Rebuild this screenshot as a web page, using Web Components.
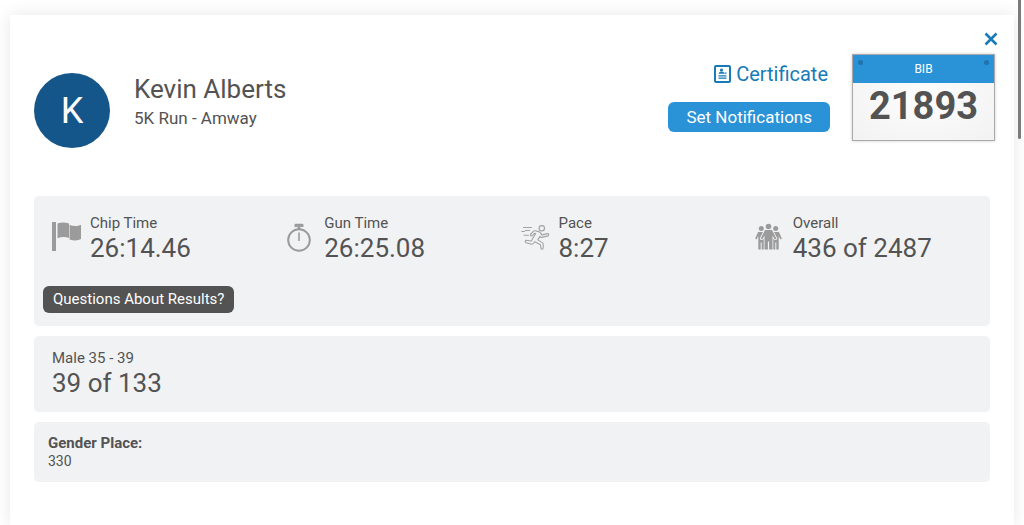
<!DOCTYPE html>
<html lang="en">
<head>
<meta charset="utf-8">
<meta name="viewport" content="width=device-width, initial-scale=1">
<title>Kevin Alberts - Results</title>
<style>
  html { background: #fff; }
  body { margin: 0; font-family: Roboto, "Liberation Sans", sans-serif; color: #535353; }
</style>
</head>
<body>
<result-page>
  <result-card>
    <athlete-summary slot="athlete" initial="K">
      <span slot="name">Kevin Alberts</span>
      <span slot="race">5K Run - Amway</span>
    </athlete-summary>
    <result-actions slot="actions"></result-actions>
    <race-bib slot="bib">21893</race-bib>

    <result-panel class="times">
      <metric-grid>
        <result-metric icon="flag" label="Chip Time">26:14.46</result-metric>
        <result-metric icon="watch" label="Gun Time">26:25.08</result-metric>
        <result-metric icon="runner" label="Pace">8:27</result-metric>
        <result-metric icon="group" label="Overall">436 of 2487</result-metric>
      </metric-grid>
      <question-button>Questions About Results?</question-button>
    </result-panel>
    <result-panel class="division">
      <result-metric label="Male 35 - 39">39 of 133</result-metric>
    </result-panel>
    <result-panel>
      <place-detail label="Gender Place:">330</place-detail>
    </result-panel>
  </result-card>
</result-page>

<script>
  const ICONS = {
    flag: `<svg width="30" height="30" viewBox="0 0 30 30" fill="#9b9b9b">
      <rect x="0" y="0" width="4" height="29"/>
      <path d="M5.500 1.500C9 .2 13 .2 17 1.500V16C13.500 14.600 9.500 14.600 5.500 16.200Z"/>
      <path d="M17.600 3C22 4.600 26 4.200 29 2.800V17C26 18.800 22 18.800 17.600 17.400Z"/></svg>`,
    watch: `<svg width="30" height="30" viewBox="0 0 30 30" fill="none" stroke="#9b9b9b">
      <circle cx="13" cy="18" r="10.800" stroke-width="2"/>
      <path d="M13 4V7" stroke-width="3"/><path d="M9.800 5V3H16.200V5" stroke-width="2.600" stroke-linejoin="round"/>
      <path d="M13 10.500V19" stroke-width="1.600"/></svg>`,
    runner: `<svg width="30" height="30" viewBox="0 0 30 30" fill="none" stroke="#a2a2a2" stroke-width="1.100" stroke-linejoin="round" stroke-linecap="round">
      <circle cx="20.800" cy="6.300" r="2.700"/>
      <path d="M2.500 5.500H10.500M4.500 8.500H8.500M.8 9.500H3.600M3 13.200H7.500"/>
      <path d="M9.400 12.500L12.500 9.200Q13.200 8.600 14.200 8.800L18.500 9.900Q19.400 10.300 19.900 11.400L20.900 12.900L26.500 11.600Q28 11.600 27.700 12.900L27 13.900L20.700 15.400Q19.700 15.600 19 14.400L16.800 17.900L21 20.400Q22.200 21.200 22.200 22.400V26.200Q21.700 27.800 20 26.800L19.500 22.700L13.800 19.700L12.700 21Q12 22.200 10.700 22.200L5 20.700Q3.600 19.700 4.800 18.300L10.300 19L14.700 11.500L13.400 11.300L11 14Q9.400 14.400 9.400 12.500Z"/></svg>`,
    group: `<svg width="30" height="30" viewBox="0 0 30 30" fill="#9b9b9b">
      <circle cx="13.500" cy="4.500" r="2.800"/><circle cx="6.300" cy="6.600" r="2.500"/><circle cx="20.700" cy="6.600" r="2.500"/>
      <path d="M10 8H17L21.300 16.500L19.800 17.500L17.500 13.500V27.500H14.100V19.500H12.900V27.500H9.500V13.500L7.200 17.500L5.700 16.500Z"/>
      <path d="M3.100 10H8L4.800 16.200Q5 18.500 7.500 18L8.700 16.500V27.500H6.700V20.500H5.700V27.500H3.300V14L1.500 17.500L.1 16.600Z"/>
      <path d="M23.900 10H19L22.200 16.200Q22 18.500 19.500 18L18.300 16.500V27.500H20.300V20.500H21.300V27.500H23.700V14L25.500 17.500L26.900 16.600Z"/></svg>`
  };

  function define(name, render) {
    customElements.define(name, class extends HTMLElement {
      constructor() {
        super();
        this.attachShadow({ mode: "open" });
      }
      connectedCallback() {
        this.shadowRoot.innerHTML = render(this);
      }
    });
  }

  define("result-page", () => `
    <style>
      :host { display: flow-root; min-height: 100vh; box-sizing: border-box; overflow: hidden; position: relative; }
      .thumb { position: absolute; top: -4px; right: 3px; width: 3px; height: 143px; border-radius: 2px; background: #7b7b7b; }
    </style>
    <slot></slot><div class="thumb" aria-hidden="true"></div>`);

  define("result-card", () => `
    <style>
      :host { display: block; box-sizing: border-box; margin: 15px 10px 0; min-height: calc(100vh - 15px);
        background: #fff; box-shadow: 0 0 16px rgba(0,0,0,.1); }
      .bar { display: flex; justify-content: flex-end; padding: 14px 13px 0; }
      button { display: flex; align-items: center; justify-content: center; width: 20px; height: 20px;
        border: 0; padding: 0; background: none; color: #187ab7; }
      header { display: flex; align-items: flex-start; padding: 5px 19px 0 24px; min-height: 142px; }
      ::slotted([slot=athlete]) { flex: 1; margin-top: 19px; }
      ::slotted([slot=actions]) { margin: 8px 22px 0 0; }
      main { display: flex; flex-direction: column; gap: 10px; padding: 0 24px 24px; }
    </style>
    <div class="bar"><button type="button" aria-label="Close">
      <svg width="14" height="14" viewBox="0 0 14 14" stroke="currentColor" stroke-width="2.600"><path d="M1.500 1.500L12.500 12.500M12.500 1.500L1.500 12.500"/></svg>
    </button></div>
    <header><slot name="athlete"></slot><slot name="actions"></slot><slot name="bib"></slot></header>
    <main><slot></slot></main>`);

  define("athlete-summary", el => `
    <style>
      :host { display: flex; gap: 24px; }
      .avatar { display: flex; align-items: center; justify-content: center; width: 76px; height: 75px;
        border-radius: 50%; background: #14558a; color: #fff; font-size: 36px; }
      h1 { margin: 0; font-size: 26px; line-height: 32px; font-weight: 400; }
      p { margin: 1px 0 0; font-size: 17px; line-height: 24px; }
    </style>
    <div class="avatar">${el.getAttribute("initial")}</div>
    <div><h1><slot name="name"></slot></h1><p><slot name="race"></slot></p></div>`);

  define("result-actions", () => `
    <style>
      :host { display: flex; flex-direction: column; align-items: flex-end; gap: 16px; }
      a { display: flex; align-items: center; gap: 5px; margin-right: 2px; color: #187ab7; font-size: 20px; line-height: 24px; text-decoration: none; }
      button { height: 30px; padding: 0 18px; border: 0; border-radius: 6px; background: #2a92d7; color: #fff; font: 17px/30px Roboto, "Liberation Sans", sans-serif; }
    </style>
    <a href="#certificate">
      <svg width="17" height="18" viewBox="0 0 17 18" fill="none" stroke="currentColor">
        <rect x="1" y="1" width="15" height="16" rx="1" stroke-width="2"/>
        <circle cx="7.500" cy="5" r="1.600" fill="currentColor" stroke="none"/>
        <path d="M4.500 8.800Q5 6.600 7.500 6.600T10.500 8.800Z" fill="currentColor" stroke="none"/>
        <path d="M10.500 8.200H12.500M4.500 10.800H12.500M4.500 13.200H12.500" stroke-width="1.200"/>
      </svg>Certificate</a>
    <button type="button">Set Notifications</button>`);

  define("race-bib", () => `
    <style>
      :host { display: block; box-sizing: border-box; width: 143px; height: 87px; border: 1px solid #a9a9a9;
        background: radial-gradient(#fdfdfd, #f2f2f2); box-shadow: 0 0 3px rgba(0,0,0,.2); text-align: center; }
      .head { display: flex; justify-content: space-between; padding: 0 5px; height: 28px; background: #2a92d7; color: #fff; font-size: 12px; line-height: 29px; }
      i { width: 5px; height: 5px; margin-top: 5px; border-radius: 50%; background: #2173ad; }
      .number { font-size: 38px; line-height: 46px; font-weight: 700; }
    </style>
    <div class="head"><i></i><span>BIB</span><i></i></div>
    <div class="number"><slot></slot></div>`);

  define("result-panel", () => `
    <style>
      :host { display: block; padding: 12px 9px; border-radius: 5px; background: #f1f2f4; }
      :host(.times) { padding: 17px 10px 13px 9px; }
      :host(.division) { padding-bottom: 14px; }
    </style><slot></slot>`);

  define("metric-grid", () => `
    <style>:host { display: grid; grid-template-columns: repeat(4, 1fr); margin-bottom: 23px; }</style><slot></slot>`);

  define("result-metric", el => `
    <style>
      :host { display: flex; gap: 8px; padding: 0 9px; }
      svg { display: block; margin-top: 9px; }
      .label { font-size: 15px; line-height: 20px; }
      .value { font-size: 26px; line-height: 30px; white-space: nowrap; }
    </style>
    ${ICONS[el.getAttribute("icon")] || ""}
    <div><div class="label">${el.getAttribute("label")}</div><div class="value"><slot></slot></div></div>`);

  define("question-button", () => `
    <style>
      :host { display: block; }
      button { display: block; height: 27px; padding: 0 10px; border: 0; border-radius: 6px; background: #535353; color: #fff; font: 15px/27px Roboto, "Liberation Sans", sans-serif; }
    </style><button type="button"><slot></slot></button>`);

  define("place-detail", el => `
    <style>
      :host { display: block; padding: 0 5px; }
      .label { font-size: 15px; line-height: 18px; font-weight: 700; }
      .value { font-size: 14px; line-height: 18px; }
    </style>
    <div class="label">${el.getAttribute("label")}</div><div class="value"><slot></slot></div>`);
</script>
</body>
</html>
